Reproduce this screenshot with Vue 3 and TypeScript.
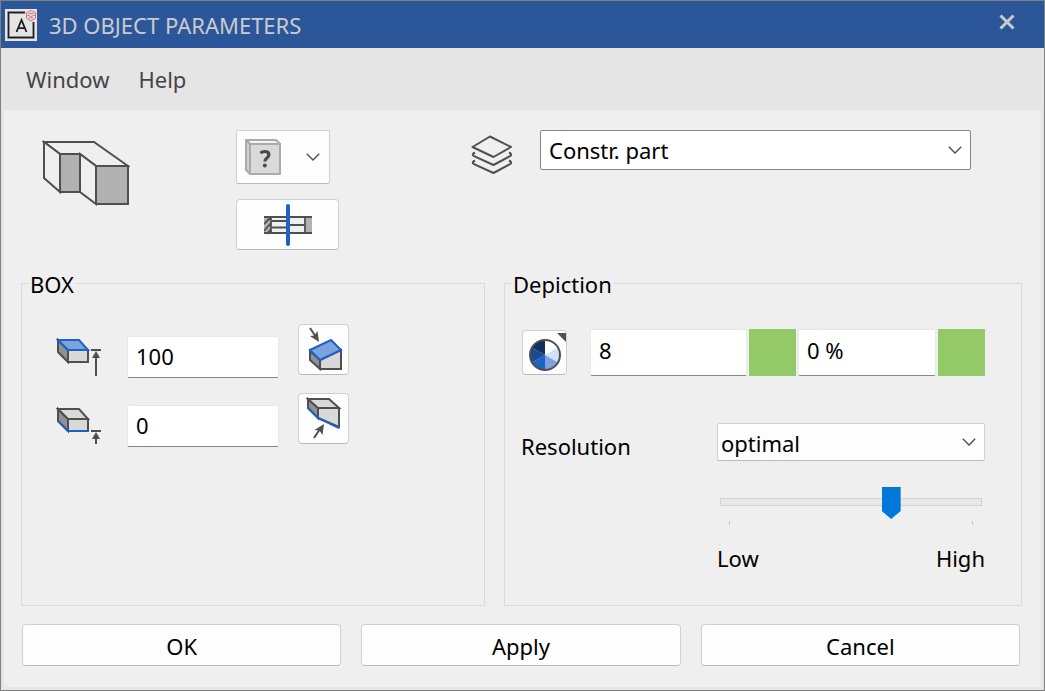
<script setup lang="ts">
import { ref } from 'vue'

const layer = ref('Constr. part')
const upper = ref('100')
const lower = ref('0')
const color = ref('8')
const transparency = ref('0 %')
const resolution = ref('optimal')
const level = ref(2)
</script>

<template>
  <main class="dialog">
    <header class="titlebar">
      <svg class="app-icon" viewBox="0 0 32 32" aria-hidden="true">
        <rect width="32" height="32" fill="#e4e4e4" />
        <path d="M20 3.5H3.5v25h25V13" fill="none" stroke="#a8a8a8" stroke-width="3" />
        <path d="M20 3.5H3.5v25h25V13" fill="none" stroke="#1c1c1c" stroke-width="1.3" />
        <path d="M11.5 23l5-12 5 12M13.2 19.2h6.6" fill="none" stroke="#1c1c1c" stroke-width="1.8" />
        <g fill="none" stroke="#dc7070" stroke-width="1">
          <path d="M26 1.5l4.5 2.2v5.6L26 12l-4.500-2.700V3.700z" />
          <path d="M23.500 4.500h5M22 6l4 1.500 4-1.500M23.500 9h5" />
        </g>
      </svg>
      <h1>3D OBJECT PARAMETERS</h1>
      <button type="button" class="close" aria-label="Close">
        <svg viewBox="0 0 16 16" width="16" height="16"><path d="M1.500 1.500l13 13M14.500 1.500l-13 13" fill="none" stroke="#cbcbcb" stroke-width="3" /></svg>
      </button>
    </header>

    <nav class="menu">
      <button type="button">Window</button>
      <button type="button">Help</button>
    </nav>

    <div class="body">
      <div class="columns">
        <div class="shape">
          <svg class="prism" width="88" height="68" viewBox="0 0 88 68" aria-hidden="true">
            <g stroke="#4f4f4f" stroke-width="2" stroke-linejoin="miter">
              <path d="M2 2h50l34 24H54L38 14H18z" fill="#efefef" />
              <path d="M2 2v36l16 14V14z" fill="#efefef" />
              <path d="M38 14v38l16 12V26z" fill="#efefef" />
              <path d="M18 14h20v38H18zM54 26h32v38H54z" fill="#b1b1b1" />
            </g>
          </svg>
          <div class="shape-buttons">
            <button type="button" class="tool preset" aria-label="Choose material">
              <svg width="36" height="36" viewBox="0 0 36 36">
                <g stroke="#aaa" stroke-width="2" stroke-linejoin="round">
                  <path d="M1 1h30l4 4H5z" fill="#f4f4f4" />
                  <path d="M1 1l4 4v30l-4-4z" fill="#d0d0d0" />
                  <path d="M5 5h30v30H5z" fill="#dadada" />
                </g>
                <path d="M15.500 14.200q1.800-1.700 4.400-1.700 4 0 4 3.300 0 1.800-2.200 3.500-1.700 1.300-1.700 3.100" fill="none" stroke="#4a4a4a" stroke-width="3.200" />
                <circle cx="19.800" cy="26.500" r="2" fill="#4a4a4a" />
              </svg>
              <svg width="14" height="8" viewBox="0 0 14 8"><path d="M.8.800L7 7 13.200.800" fill="none" stroke="#4a4a4a" stroke-width="1.300" /></svg>
            </button>
            <button type="button" class="tool section" aria-label="Section">
              <svg width="48" height="42" viewBox="0 0 48 42">
                <path d="M0 13h7v16H0zM42 13h6v16h-6z" fill="#b1b1b1" />
                <path d="M8 13h33v16H8z" fill="#efefef" />
                <path d="M0 20l7-7M0 27l7-8M3 30l4-5M7 13v17M41 13v17M8 17h16M8 23.500h16M24 21h17" fill="none" stroke="#4f4f4f" stroke-width="1.800" />
                <path d="M0 13h48M0 29h48" stroke="#4f4f4f" stroke-width="2" />
                <path d="M24 2v38" stroke="#1e62c8" stroke-width="4" stroke-linecap="round" />
              </svg>
            </button>
          </div>
        </div>

        <div class="layer">
          <svg width="42" height="40" viewBox="0 0 42 40" aria-hidden="true">
            <g fill="none" stroke="#4f4f4f" stroke-width="2" stroke-linejoin="round">
              <path d="M19 1.500L40 12 22.500 22 1.500 12z" />
              <path d="M4 17.500q-3.500 1.800-1.500 3.300L22.500 30 39.500 20.800q1.800-1.600-1.500-3.300" />
              <path d="M4 25.500q-3.500 1.800-1.500 3.300L22.500 38 39.500 28.800q1.800-1.600-1.500-3.300" />
            </g>
          </svg>
          <div class="dropdown strong">
            <select v-model="layer" aria-label="Layer"><option>Constr. part</option></select>
            <svg width="14" height="8" viewBox="0 0 14 8" aria-hidden="true"><path d="M.8.800L7 7 13.200.800" fill="none" stroke="#4a4a4a" stroke-width="1.300" /></svg>
          </div>
        </div>

        <fieldset class="box">
          <legend>BOX</legend>
          <div class="height-row">
            <svg class="level-icon" width="46" height="42" viewBox="0 0 46 42" aria-hidden="true">
              <g stroke-width="2">
                <path d="M2 4v12l10 10V14z" fill="#919191" stroke="#4f4f4f" />
                <path d="M12 14h20v12H12z" fill="#d9d9d9" stroke="#4f4f4f" />
                <path d="M2 4h21l9 10H12z" fill="#7ca3de" stroke="#1e62c8" />
                <path d="M35 14h10M40 40V18" stroke="#4f4f4f" />
              </g>
              <path d="M40 15l4 7h-8z" fill="#4f4f4f" />
            </svg>
            <input v-model="upper" type="text" aria-label="Upper edge height" />
            <button type="button" class="tool slope" aria-label="Slope upper face">
              <svg width="49" height="49" viewBox="0 0 49 49">
                <g stroke-width="2">
                  <path d="M11 26v9l10 9V35z" fill="#919191" stroke="#4f4f4f" />
                  <path d="M21 35l21-10v19H21z" fill="#d9d9d9" stroke="#4f4f4f" />
                  <path d="M11 25l21-10 10 10-21 10z" fill="#7ca3de" stroke="#1e62c8" />
                  <path d="M11 3l6 9" stroke="#4f4f4f" />
                </g>
                <path d="M20 17l-9-6 4.500-.5 3-4.500z" fill="#4f4f4f" />
              </svg>
            </button>
          </div>
          <div class="height-row">
            <svg class="level-icon" width="46" height="42" viewBox="0 0 46 42" aria-hidden="true">
              <g stroke-width="2">
                <path d="M2 4v12l10 10V14z" fill="#919191" stroke="#4f4f4f" />
                <path d="M12 14h20v12H12z" fill="#d9d9d9" stroke="#4f4f4f" />
                <path d="M2 4h21l9 10H12z" fill="#d9d9d9" stroke="#4f4f4f" />
                <path d="M2 16l10 10h21" fill="none" stroke="#1e62c8" />
                <path d="M35 26h10M40 39V30" stroke="#4f4f4f" />
              </g>
              <path d="M40 27l4 7h-8z" fill="#4f4f4f" />
            </svg>
            <input v-model="lower" type="text" aria-label="Lower edge height" />
            <button type="button" class="tool slope" aria-label="Slope lower face">
              <svg width="49" height="49" viewBox="0 0 49 49">
                <g stroke-width="2">
                  <path d="M9 5v9l10 10V14z" fill="#919191" stroke="#4f4f4f" />
                  <path d="M19 14h21v19L19 24z" fill="#d9d9d9" stroke="#4f4f4f" />
                  <path d="M9 5h21l10 9H19z" fill="#d9d9d9" stroke="#4f4f4f" />
                  <path d="M9 14l10 10 21 10" fill="none" stroke="#1e62c8" />
                  <path d="M15 44l6-9" stroke="#4f4f4f" />
                </g>
                <path d="M25 30l-1.500 11-3-4.500-5-.5z" fill="#4f4f4f" />
              </svg>
            </button>
          </div>
        </fieldset>

        <fieldset class="depiction">
          <legend>Depiction</legend>
          <div class="color-row">
            <button type="button" class="tool wheel" aria-label="Colour">
              <svg width="43" height="43" viewBox="0 0 43 43">
                <path d="M22 24V9a15 15 0 0 1 13 7.500z" fill="#fff" />
                <path d="M22 24l13-7.500a15 15 0 0 1 0 15z" fill="#d2e0f4" />
                <path d="M22 24l13 7.500A15 15 0 0 1 22 39z" fill="#7ca3de" />
                <path d="M22 24v15a15 15 0 0 1-13-7.500z" fill="#1e62c8" />
                <path d="M22 24L9 31.500a15 15 0 0 1 0-15z" fill="#1b4a91" />
                <path d="M22 24L9 16.500A15 15 0 0 1 22 9z" fill="#122f60" />
                <circle cx="22" cy="24" r="15" fill="none" stroke="#4f4f4f" stroke-width="2" />
                <path d="M34 2h10v10z" fill="#4f4f4f" />
              </svg>
            </button>
            <input v-model="color" class="color" type="text" aria-label="Colour number" />
            <button type="button" class="swatch" aria-label="Colour swatch"></button>
            <input v-model="transparency" class="percent" type="text" aria-label="Transparency" />
            <button type="button" class="swatch" aria-label="Transparency swatch"></button>
          </div>
          <div class="resolution-row">
            <label for="resolution">Resolution</label>
            <div class="dropdown">
              <select id="resolution" v-model="resolution"><option>optimal</option></select>
              <svg width="14" height="8" viewBox="0 0 14 8" aria-hidden="true"><path d="M.8.800L7 7 13.200.800" fill="none" stroke="#4a4a4a" stroke-width="1.300" /></svg>
            </div>
          </div>
          <div class="slider">
            <input v-model.number="level" type="range" min="0" max="3" aria-label="Resolution level" />
            <div class="ticks"><i></i><i></i></div>
            <div class="ends"><span>Low</span><span>High</span></div>
          </div>
        </fieldset>
      </div>

      <footer class="actions">
        <button type="button" class="tool">OK</button>
        <button type="button" class="tool">Apply</button>
        <button type="button" class="tool">Cancel</button>
      </footer>
    </div>
  </main>
</template>

<style>
body {
  background: #e5e5e5;
}
</style>

<style scoped>
.dialog,
.dialog * {
  box-sizing: border-box;
}

.dialog {
  display: flex;
  flex-direction: column;
  min-height: 100vh;
  border: 1px solid #7f7f7f;
  background: #e5e5e5;
  color: #000;
  font: 22px/30px "Noto Sans", "Open Sans", sans-serif;
}

button,
input,
select {
  margin: 0;
  font: inherit;
  color: inherit;
}

svg {
  display: block;
  flex: none;
}

.titlebar {
  display: flex;
  align-items: center;
  height: 47px;
  padding: 0 29px 0 4px;
  background: #2b579a;
  color: #cbcbcb;
}

.app-icon {
  width: 32px;
  height: 32px;
}

h1 {
  flex: 1;
  margin: 0 0 0 12px;
  font-size: 22px;
  font-weight: 400;
}

.close {
  padding: 0 0 5px;
  border: 0;
  background: none;
}

.menu {
  display: flex;
  align-items: center;
  gap: 29px;
  height: 62px;
  padding-left: 25px;
  color: #444;
}

.menu button {
  padding: 0;
  border: 0;
  background: none;
}

.body {
  display: flex;
  flex: 1;
  flex-direction: column;
  margin: 0 3px 3px;
  padding: 20px 19px 21px 17px;
  background: #efefef;
}

.columns {
  display: grid;
  flex: 1;
  grid-template-columns: 464fr 518fr;
  grid-template-rows: 120px 1fr;
  column-gap: 19px;
  row-gap: 18px;
}

.shape {
  display: flex;
  align-items: flex-start;
  gap: 106px;
  padding-left: 21px;
}

.prism {
  margin-top: 10px;
}

.shape-buttons {
  display: flex;
  flex-direction: column;
  gap: 15px;
}

.tool {
  display: flex;
  align-items: center;
  justify-content: center;
  padding: 0;
  border: 1px solid #d0d0d0;
  border-bottom-color: #bababa;
  border-radius: 4px;
  background: #fdfdfd;
}

.preset {
  gap: 25px;
  width: 94px;
  height: 54px;
  padding-right: 1px;
  border-radius: 2px;
}

.section {
  width: 103px;
  height: 51px;
}

.layer {
  display: flex;
  align-items: flex-start;
  gap: 27px;
  padding-right: 51px;
  margin-left: -33px;
}

.layer > svg {
  margin-top: 5px;
}

.dropdown {
  position: relative;
  flex: 1;
}

.dropdown select {
  display: block;
  width: 100%;
  height: 38px;
  padding: 2px 32px 0 3px;
  border: 1px solid #d0d0d0;
  border-bottom-color: #bababa;
  border-radius: 2px;
  background: #fdfdfd;
  appearance: none;
}

.dropdown.strong select {
  height: 40px;
  padding: 0 32px 0 8px;
  border-color: #868686;
  background: #fff;
}

.dropdown svg {
  position: absolute;
  top: 50%;
  right: 9px;
  margin-top: -4px;
  pointer-events: none;
}

fieldset {
  min-width: 0;
  margin: 0;
  border: 1px solid #dadada;
}

legend {
  padding: 1px 2px 0;
}

.box {
  padding: 25px 0 0 6px;
}

.height-row {
  display: grid;
  grid-template-columns: 52px 152px 51px;
  align-items: end;
  column-gap: 19px;
  height: 54px;
  margin: 0 0 15px 28px;
}

input[type="text"] {
  width: 100%;
  height: 42px;
  padding: 0 8px 2px;
  border: 1px solid #e8e8e8;
  border-bottom: 1px solid #868686;
  border-radius: 2px;
  outline: 0;
  background: #fff;
}

.slope {
  align-self: start;
  width: 51px;
  height: 51px;
}

.depiction {
  padding: 30px 36px 0 6px;
}

.color-row {
  display: flex;
  align-items: center;
  gap: 2px;
  margin-left: 11px;
}

.wheel {
  width: 45px;
  height: 45px;
  margin-right: 21px;
}

.color-row input[type="text"] {
  height: 47px;
  padding-bottom: 6px;
}

.color-row .color {
  flex: 1 1 157px;
  min-width: 0;
}

.color-row .percent {
  flex: 1 1 138px;
  min-width: 0;
}

.swatch {
  width: 47px;
  height: 47px;
  padding: 0;
  border: 0;
  background: #94c968;
}

.resolution-row {
  display: flex;
  align-items: center;
  margin: 47px 0 0 10px;
}

.resolution-row label {
  width: 196px;
  padding-top: 8px;
}

.slider {
  margin: 25px 0 0 206px;
}

.slider input {
  display: block;
  width: calc(100% - 6px);
  height: 32px;
  margin: 0 3px;
  background: none;
  appearance: none;
}

.slider input::-webkit-slider-runnable-track {
  height: 8px;
  border: 1px solid #d3d5d5;
  background: #e7eaea;
}

.slider input::-webkit-slider-thumb {
  width: 19px;
  height: 32px;
  margin-top: -12px;
  border: 0;
  border-radius: 0;
  background: #0078d7;
  clip-path: polygon(0 0, 100% 0, 100% 75%, 50% 100%, 0 75%);
  appearance: none;
}

.ticks {
  display: flex;
  justify-content: space-between;
  padding: 3px 12px 0;
}

.ticks i {
  width: 1px;
  height: 4px;
  background: #c4c4c4;
}

.ends {
  display: flex;
  justify-content: space-between;
  margin-top: 18px;
}

.actions {
  display: grid;
  grid-template-columns: repeat(3, 1fr);
  gap: 20px;
  padding: 18px 2px 0 1px;
}

.actions button {
  height: 42px;
  padding-top: 1px;
}
</style>
